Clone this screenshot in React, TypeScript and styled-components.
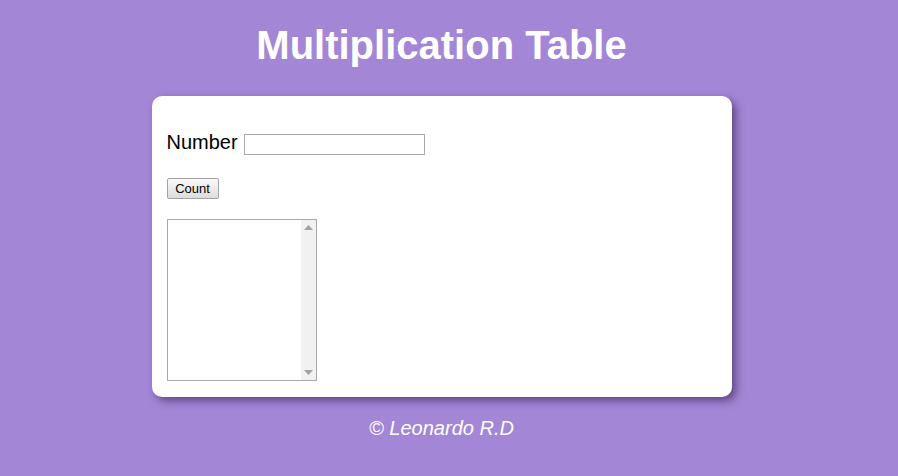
import React from "react";
import styled, { createGlobalStyle } from "styled-components";

const Global = createGlobalStyle`
  html, body { margin: 0; padding: 0; }
  body {
    background: #a486d6;
    font-family: "Liberation Sans", Arial, sans-serif;
    min-height: 476px;
  }
`;

const Page = styled.div`
  display: flex;
  flex-direction: column;
  align-items: center;
  padding: 23px 15px 0 0;
`;

const Title = styled.h1`
  margin: 0 0 28px;
  font-size: 40px;
  line-height: 45px;
  font-weight: 700;
  color: #ffffff;
  text-align: center;
`;

const Card = styled.div`
  box-sizing: border-box;
  width: 580px;
  height: 301px;
  background: #ffffff;
  border-radius: 10px;
  box-shadow: 4px 4px 8px rgba(40, 20, 70, 0.55);
  padding: 15px;
  display: flex;
  flex-direction: column;
  align-items: flex-start;
`;

const Row = styled.div`
  display: flex;
  align-items: center;
  gap: 6px;
  margin-top: 19px;
`;

const Label = styled.label`
  font-size: 20px;
  line-height: 23px;
  color: #000;
`;

const NumberInput = styled.input`
  box-sizing: border-box;
  width: 181px;
  height: 21px;
  border: 1px solid #a9a9a9;
  padding: 1px 3px;
  font-size: 13px;
  outline: none;
  margin: 4px 0 0 0;
`;

const Button = styled.button`
  box-sizing: border-box;
  width: 52px;
  height: 21px;
  margin-top: 23px;
  padding: 0;
  font-family: "Liberation Sans", Arial, sans-serif;
  font-size: 13px;
  color: #000;
  background: linear-gradient(#fafafa, #dcdcdc);
  border: 1px solid #a3a3a3;
  border-radius: 2px;
`;

const OutputBox = styled.div`
  box-sizing: border-box;
  width: 150px;
  height: 162px;
  margin-top: 20px;
  border: 1px solid #a9a9a9;
  display: flex;
  background: #fff;
`;

const Output = styled.textarea`
  flex: 1;
  min-width: 0;
  border: none;
  resize: none;
  overflow: hidden;
  outline: none;
  padding: 2px;
  font-family: "Liberation Mono", monospace;
  font-size: 13px;
`;

const ScrollTrack = styled.div`
  width: 15px;
  background: #f1f1f1;
  display: flex;
  flex-direction: column;
  justify-content: space-between;
  align-items: center;
  padding: 5px 0;
  box-sizing: border-box;
`;

const Arrow = ({ down }: { down?: boolean }) => (
  <svg width="9" height="5" viewBox="0 0 9 5">
    <polygon points={down ? "0,0 4.5,5 9,0" : "0,5 4.5,0 9,5"} fill="#a3a3a3" />
  </svg>
);

const Footer = styled.p`
  margin: 20px 0 0;
  font-size: 20px;
  line-height: 23px;
  font-style: italic;
  color: #ffffff;
  text-align: center;
`;

export default function App() {
  return (
    <>
      <Global />
      <Page>
        <Title>Multiplication Table</Title>
        <Card>
          <Row>
            <Label htmlFor="num">Number</Label>
            <NumberInput id="num" type="text" />
          </Row>
          <Button>Count</Button>
          <OutputBox>
            <Output readOnly />
            <ScrollTrack>
              <Arrow />
              <Arrow down />
            </ScrollTrack>
          </OutputBox>
        </Card>
        <Footer>© Leonardo R.D</Footer>
      </Page>
    </>
  );
}
